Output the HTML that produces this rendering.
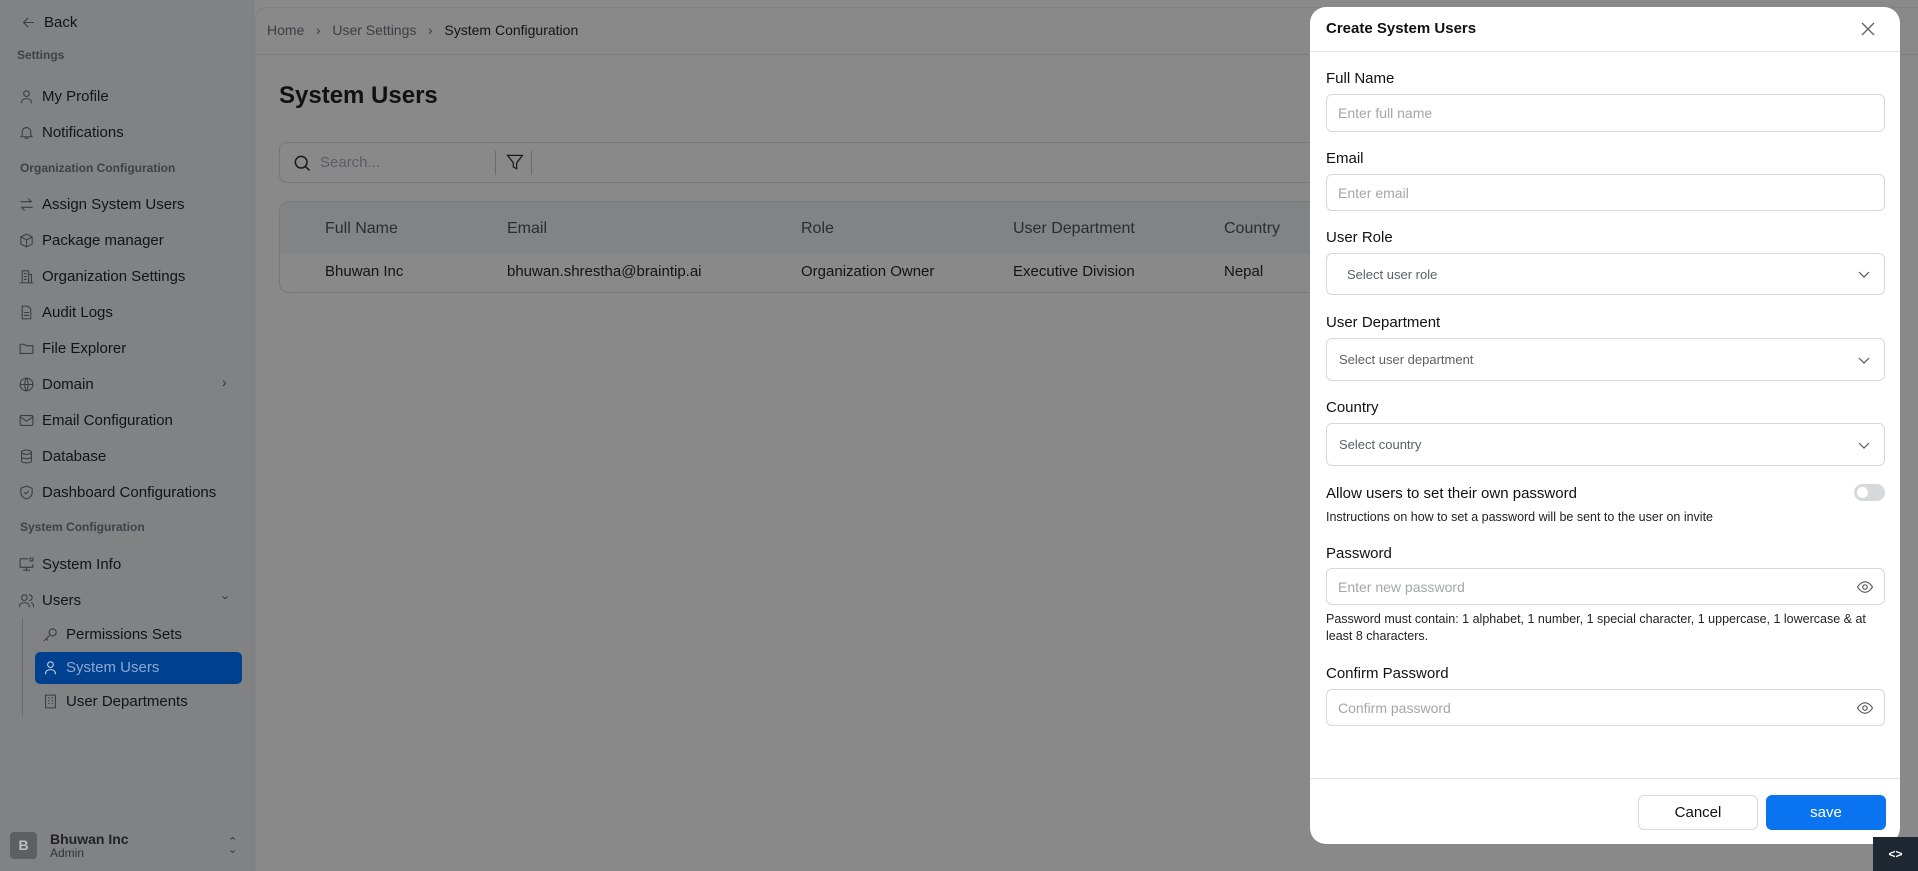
<!DOCTYPE html>
<html><head><meta charset="utf-8"><style>
*{box-sizing:border-box;margin:0;padding:0}
body{width:1918px;height:871px;overflow:hidden;position:relative;font-family:"Liberation Sans",sans-serif;background:#898989;color:#111}
.sb{position:absolute;left:0;top:0;width:254px;height:871px;background:#808284;border-right:1px solid #7a7c7f}
.t{position:absolute;white-space:nowrap}
.it{position:absolute;left:18px;font-size:15px;color:#141414;display:flex;align-items:center;gap:7px}
.it svg{width:17px;height:17px;stroke:#3a3d42;fill:none;stroke-width:1.5;stroke-linecap:round;stroke-linejoin:round}
.sec{position:absolute;left:20px;font-size:12px;font-weight:bold;color:#3e4146}
.main{position:absolute;left:255px;top:7px;right:0;bottom:0;background:#898989;border-top-left-radius:12px;border-left:1px solid #7e8083;border-top:1px solid #7e8083}
.modal{position:absolute;left:1310px;top:7px;width:590px;height:837px;background:#fff;border-radius:16px}
.lbl{position:absolute;left:16px;font-size:15px;color:#111;font-weight:500}
.inp{position:absolute;left:16px;width:559px;border:1px solid #d5d8dc;border-radius:6px;font-size:14px;color:#a3a6ab;padding-left:11px;display:flex;align-items:center}
.sel{color:#5b6068;font-size:13px}
.chev{position:absolute;right:14px;top:50%;margin-top:-6px;width:12px;height:12px}
.eye{position:absolute;right:10px;top:50%;margin-top:-9px;width:18px;height:18px}
</style></head><body>
<div class="sb">
 <div class="it" style="top:14px;left:20px"><svg viewBox="0 0 24 24"><path d="M19 12H5M11 6l-6 6 6 6"/></svg><span style="font-size:15px">Back</span></div>
 <div class="sec" style="top:48px;left:17px">Settings</div>
 <div class="it" style="top:88px"><svg viewBox="0 0 24 24"><circle cx="12" cy="8" r="4"/><path d="M5 21c0-4 3-6 7-6s7 2 7 6"/></svg>My Profile</div>
 <div class="it" style="top:124px"><svg viewBox="0 0 24 24"><path d="M6 16V11a6 6 0 0112 0v5l2 2H4zM10 20h4"/></svg>Notifications</div>
 <div class="sec" style="top:161px">Organization Configuration</div>
 <div class="it" style="top:196px"><svg viewBox="0 0 24 24"><path d="M4 8h15l-4-4M20 16H5l4 4"/></svg>Assign System Users</div>
 <div class="it" style="top:232px"><svg viewBox="0 0 24 24"><path d="M12 3l8 4v10l-8 4-8-4V7zM4 7l8 4 8-4M12 11v10"/></svg>Package manager</div>
 <div class="it" style="top:268px"><svg viewBox="0 0 24 24"><path d="M6 21V4h9v17M15 9h4v12M3 21h18M9 8h3M9 12h3M9 16h3"/></svg>Organization Settings</div>
 <div class="it" style="top:304px"><svg viewBox="0 0 24 24"><path d="M6 3h8l4 4v14H6zM9 12h6M9 16h6"/></svg>Audit Logs</div>
 <div class="it" style="top:340px"><svg viewBox="0 0 24 24"><path d="M3 6h6l2 2h10v11H3z"/></svg>File Explorer</div>
 <div class="it" style="top:376px"><svg viewBox="0 0 24 24"><circle cx="12" cy="12" r="9"/><path d="M3 12h18M12 3c3 3 3 15 0 18M12 3c-3 3-3 15 0 18"/></svg>Domain</div>
 <div class="t" style="left:222px;top:374px;font-size:14px;color:#333">›</div>
 <div class="it" style="top:412px"><svg viewBox="0 0 24 24"><rect x="3" y="5" width="18" height="14" rx="2"/><path d="M3 7l9 6 9-6"/></svg>Email Configuration</div>
 <div class="it" style="top:448px"><svg viewBox="0 0 24 24"><ellipse cx="12" cy="6" rx="7" ry="3"/><path d="M5 6v12c0 2 3 3 7 3s7-1 7-3V6M5 12c0 2 3 3 7 3s7-1 7-3"/></svg>Database</div>
 <div class="it" style="top:484px"><svg viewBox="0 0 24 24"><path d="M12 3l8 3v6c0 5-4 8-8 9-4-1-8-4-8-9V6zM9 12l2 2 4-4"/></svg>Dashboard Configurations</div>
 <div class="sec" style="top:520px">System Configuration</div>
 <div class="it" style="top:556px"><svg viewBox="0 0 24 24"><path d="M14 4H3v12h18v-4M8 20h8M12 16v4"/><rect x="17" y="3" width="4" height="4"/></svg>System Info</div>
 <div class="it" style="top:592px"><svg viewBox="0 0 24 24"><circle cx="9" cy="8" r="4"/><path d="M2 21c0-4 3-6 7-6s7 2 7 6M16 4a4 4 0 010 8M19 15c2 1 3 3 3 6"/></svg>Users</div>
 <div class="t" style="left:224px;top:590px;font-size:13px;color:#333;transform:rotate(90deg)">›</div>
 <div style="position:absolute;left:22px;top:618px;width:1px;height:98px;background:#6a6c70"></div>
 <div class="it" style="top:626px;left:42px"><svg viewBox="0 0 24 24"><circle cx="15" cy="9" r="5"/><path d="M11 13l-8 8M6 18l2 2"/></svg>Permissions Sets</div>
 <div style="position:absolute;left:35px;top:652px;width:207px;height:32px;background:#00418f;border-radius:5px"></div>
 <div class="it" style="top:659px;left:42px;color:#8da8cf"><svg viewBox="0 0 24 24" style="stroke:#c8d4e6"><circle cx="12" cy="8" r="4"/><path d="M5 21c0-4 3-6 7-6s7 2 7 6"/></svg>System Users</div>
 <div class="it" style="top:693px;left:42px"><svg viewBox="0 0 24 24"><rect x="5" y="3" width="14" height="18"/><path d="M9 7h1M14 7h1M9 11h1M14 11h1M9 15h1M14 15h1"/></svg>User Departments</div>
 <div style="position:absolute;left:10px;top:832px;width:27px;height:27px;background:#5d5f62;border-radius:4px;color:#c0c0c0;font-weight:bold;font-size:14px;text-align:center;line-height:27px">B</div>
 <div class="t" style="left:50px;top:831px;font-size:14px;font-weight:bold;color:#222">Bhuwan Inc</div>
 <div class="t" style="left:50px;top:846px;font-size:12px;color:#333">Admin</div>
 <div class="t" style="left:228px;top:838px;font-size:11px;color:#333;line-height:8px">⌃<br>⌄</div>
</div>
<div class="main">
 <div class="t" style="left:11px;top:14px;font-size:14px;color:#3c3e42">Home &nbsp;&nbsp;›&nbsp;&nbsp; User Settings &nbsp;&nbsp;›&nbsp;&nbsp; <span style="color:#141414">System Configuration</span></div>
 <div style="position:absolute;left:0;right:0;top:46px;height:1px;background:#7c7e81"></div>
 <div class="t" style="left:23px;top:74px;font-size:24px;font-weight:bold;color:#111">System Users</div>
 <div style="position:absolute;left:23px;top:134px;width:1200px;height:41px;border:1px solid #75777a;border-radius:8px">
  <svg style="position:absolute;left:12px;top:10px" width="20" height="20" viewBox="0 0 24 24" fill="none" stroke="#1a1a1a" stroke-width="1.8"><circle cx="11" cy="11" r="7"/><path d="M16 16l5 5"/></svg>
  <div class="t" style="left:40px;top:11px;font-size:15px;color:#5c5e62">Search...</div>
  <div style="position:absolute;left:215px;top:8px;width:1px;height:24px;background:#6a6c70"></div>
  <svg style="position:absolute;left:225px;top:9px" width="20" height="20" viewBox="0 0 24 24" fill="none" stroke="#1a1a1a" stroke-width="1.5"><path d="M3 4h18l-7 9v7l-4-2v-5z"/></svg>
  <div style="position:absolute;left:251px;top:8px;width:1px;height:24px;background:#6a6c70"></div>
 </div>
 <div style="position:absolute;left:23px;top:193px;width:1200px;height:92px;border:1px solid #75777a;border-radius:10px;overflow:hidden">
  <div style="height:52px;background:#828385"></div>
 </div>
 <div class="t" style="left:69px;top:212px;font-size:16px;color:#2a2c30">Full Name</div>
 <div class="t" style="left:251px;top:212px;font-size:16px;color:#2a2c30">Email</div>
 <div class="t" style="left:545px;top:212px;font-size:16px;color:#2a2c30">Role</div>
 <div class="t" style="left:757px;top:212px;font-size:16px;color:#2a2c30">User Department</div>
 <div class="t" style="left:968px;top:212px;font-size:16px;color:#2a2c30">Country</div>
 <div class="t" style="left:69px;top:255px;font-size:15px;color:#141414">Bhuwan Inc</div>
 <div class="t" style="left:251px;top:255px;font-size:15px;color:#141414">bhuwan.shrestha@braintip.ai</div>
 <div class="t" style="left:545px;top:255px;font-size:15px;color:#141414">Organization Owner</div>
 <div class="t" style="left:757px;top:255px;font-size:15px;color:#141414">Executive Division</div>
 <div class="t" style="left:968px;top:255px;font-size:15px;color:#141414">Nepal</div>
</div>
<div class="modal">
 <div class="t" style="left:16px;top:13px;font-size:15px;font-weight:bold">Create System Users</div>
 <svg style="position:absolute;left:550px;top:14px" width="16" height="16" viewBox="0 0 16 16" stroke="#666" stroke-width="1.4"><path d="M2 2l12 12M14 2L2 14"/></svg>
 <div style="position:absolute;left:0;right:0;top:44px;height:1px;background:#e3e5e8"></div>
 <div class="lbl" style="top:63px">Full Name</div>
 <div class="inp" style="top:87px;height:38px">Enter full name</div>
 <div class="lbl" style="top:143px">Email</div>
 <div class="inp" style="top:167px;height:37px">Enter email</div>
 <div class="lbl" style="top:222px">User Role</div>
 <div class="inp sel" style="top:246px;height:42px;padding-left:20px">Select user role<svg class="chev" viewBox="0 0 12 12" fill="none" stroke="#555" stroke-width="1.2"><path d="M1 4l5 5 5-5"/></svg></div>
 <div class="lbl" style="top:307px">User Department</div>
 <div class="inp sel" style="top:331px;height:43px;padding-left:12px">Select user department<svg class="chev" viewBox="0 0 12 12" fill="none" stroke="#555" stroke-width="1.2"><path d="M1 4l5 5 5-5"/></svg></div>
 <div class="lbl" style="top:392px">Country</div>
 <div class="inp sel" style="top:416px;height:43px;padding-left:12px">Select country<svg class="chev" viewBox="0 0 12 12" fill="none" stroke="#555" stroke-width="1.2"><path d="M1 4l5 5 5-5"/></svg></div>
 <div class="lbl" style="top:478px">Allow users to set their own password</div>
 <div style="position:absolute;left:544px;top:477px;width:31px;height:17px;border-radius:9px;background:#d6d8db"><div style="position:absolute;left:3px;top:3px;width:11px;height:11px;border-radius:50%;background:#fff"></div></div>
 <div class="t" style="left:16px;top:503px;font-size:12.5px;color:#222">Instructions on how to set a password will be sent to the user on invite</div>
 <div class="lbl" style="top:538px">Password</div>
 <div class="inp" style="top:561px;height:37px">Enter new password<svg class="eye" viewBox="0 0 24 24" fill="none" stroke="#555" stroke-width="1.5"><path d="M2 12s4-7 10-7 10 7 10 7-4 7-10 7S2 12 2 12z"/><circle cx="12" cy="12" r="3"/></svg></div>
 <div class="t" style="left:16px;top:604px;font-size:12.5px;color:#222;line-height:17px">Password must contain: 1 alphabet, 1 number, 1 special character, 1 uppercase, 1 lowercase &amp; at<br>least 8 characters.</div>
 <div class="lbl" style="top:658px">Confirm Password</div>
 <div class="inp" style="top:682px;height:37px">Confirm password<svg class="eye" viewBox="0 0 24 24" fill="none" stroke="#555" stroke-width="1.5"><path d="M2 12s4-7 10-7 10 7 10 7-4 7-10 7S2 12 2 12z"/><circle cx="12" cy="12" r="3"/></svg></div>
 <div style="position:absolute;left:0;right:0;top:771px;height:1px;background:#e3e5e8"></div>
 <div style="position:absolute;left:328px;top:788px;width:120px;height:35px;border:1px solid #d5d8dc;border-radius:6px;font-size:15px;text-align:center;line-height:33px">Cancel</div>
 <div style="position:absolute;left:456px;top:788px;width:120px;height:35px;background:#0a73f0;border-radius:6px;font-size:15px;color:#fff;text-align:center;line-height:35px">save</div>
</div>
<div style="position:absolute;left:1873px;top:837px;width:45px;height:34px;background:#1f2733;color:#fff;font-size:12px;font-weight:bold;text-align:center;line-height:34px">&lt;&gt;</div>
</body></html>
